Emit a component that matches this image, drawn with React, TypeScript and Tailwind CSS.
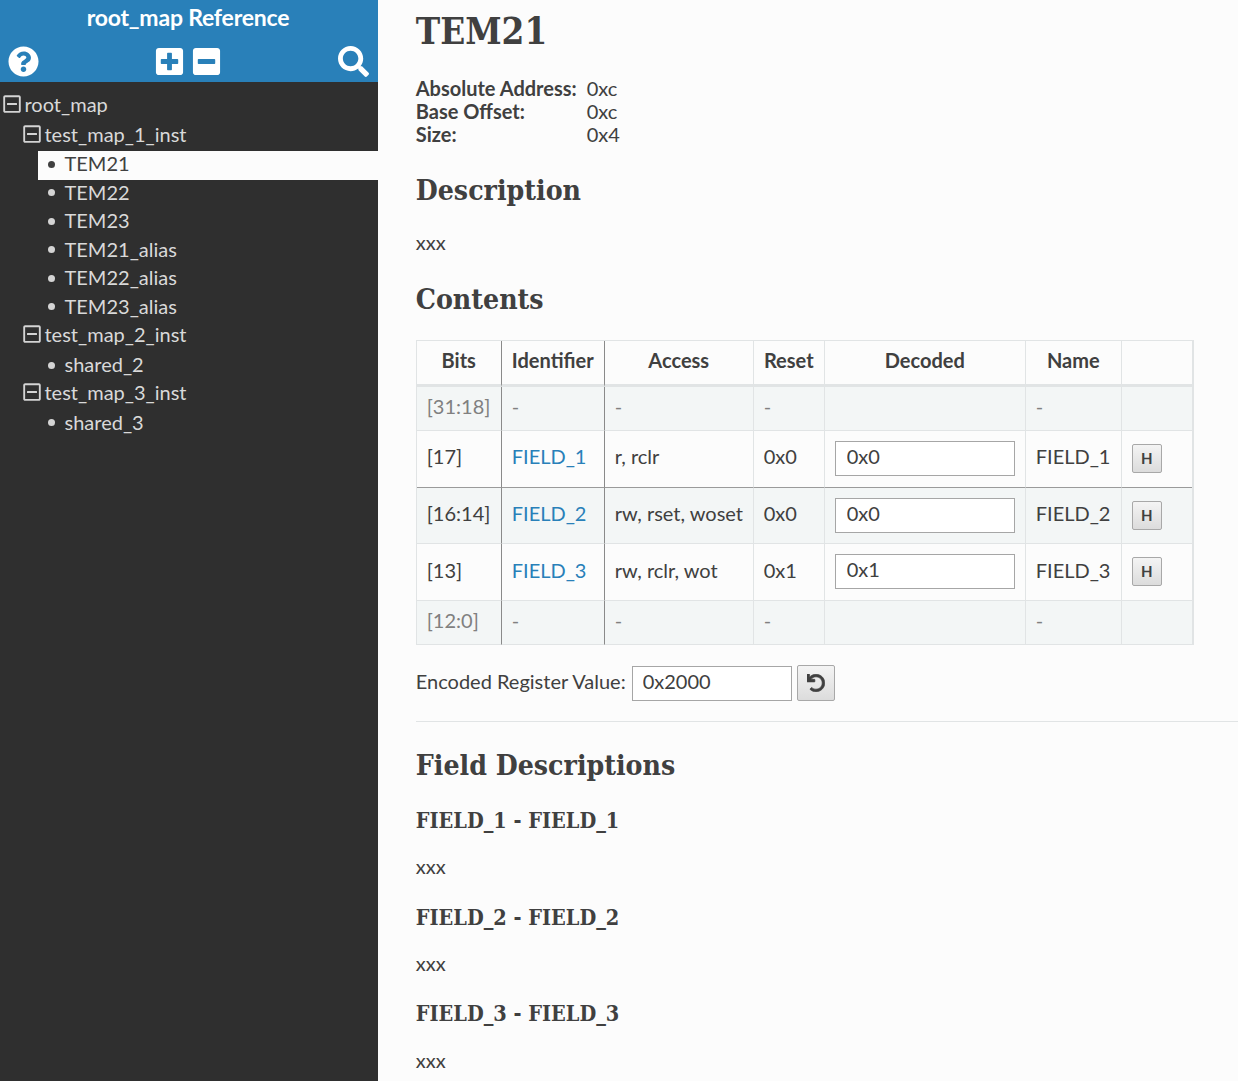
import React from "react";
import { FaMinusSquare, FaPlusSquare, FaQuestionCircle, FaRegMinusSquare, FaSearch, FaUndo } from "react-icons/fa";

const slab = "font-['DejaVu_Serif',serif] font-bold [font-stretch:condensed] text-[#404040]";

function TreeBranch({ label, rowClass }: { label: string; rowClass: string }) {
  return (
    <div className={`flex items-center gap-[2.5px] ${rowClass}`}>
      <FaRegMinusSquare size={20} color="#d4d4d4" />
      <span>{label}</span>
    </div>
  );
}

function Leaf({ label, active, rowClass }: { label: string; active?: boolean; rowClass: string }) {
  return (
    <div className={`ml-[38px] flex items-center pl-[10px] ${rowClass} ${active ? "bg-[#fcfcfc] text-[#404040]" : ""}`}>
      <span className={`mt-[2px] mr-[9.5px] h-[7px] w-[7px] rounded-full ${active ? "bg-[#404040]" : "bg-[#d4d4d4]"}`} />
      <span>{label}</span>
    </div>
  );
}

function Sidebar() {
  return (
    <aside className="flex h-full w-[378px] shrink-0 flex-col bg-[#2f2f2f] text-[20px] text-[#d9d9d9]">
      <div className="h-[82px] bg-[#2980b9] text-white">
        <div className="h-[38px] pt-[1px] pr-[2px] text-center text-[23px] leading-[32px] font-bold tracking-[-0.2px]">root_map Reference</div>
        <div className="flex items-center justify-between pt-[8px] pr-[9.5px] pl-[7.5px]">
          <FaQuestionCircle size={31} color="#fff" />
          <div className="flex gap-[6.5px]">
            <FaPlusSquare size={31} color="#fff" />
            <FaMinusSquare size={31} color="#fff" />
          </div>
          <FaSearch size={31} color="#fff" />
        </div>
      </div>
      <nav className="pt-[8px] leading-[28px]">
        <TreeBranch label="root_map" rowClass="h-[30px] pb-[2px] pl-[2px]" />
        <TreeBranch label="test_map_1_inst" rowClass="h-[30px] pb-[2px] pl-[22px]" />
        <Leaf label="TEM21" active rowClass="mt-[1px] -mb-[1.5px] h-[29px] pb-[5px]" />
        <Leaf label="TEM22" rowClass="h-[28.5px] pb-[2px]" />
        <Leaf label="TEM23" rowClass="h-[28.5px] pb-[2px]" />
        <Leaf label="TEM21_alias" rowClass="h-[28.5px] pb-[2px]" />
        <Leaf label="TEM22_alias" rowClass="h-[28.5px] pb-[2px]" />
        <Leaf label="TEM23_alias" rowClass="h-[28.5px] pb-[2px]" />
        <TreeBranch label="test_map_2_inst" rowClass="h-[29px] pb-[4px] pl-[22px]" />
        <Leaf label="shared_2" rowClass="h-[28.5px]" />
        <TreeBranch label="test_map_3_inst" rowClass="h-[29px] pb-[2px] pl-[22px]" />
        <Leaf label="shared_3" rowClass="h-[28.5px]" />
      </nav>
    </aside>
  );
}

type Row = {
  bits: string;
  id: string;
  access: string;
  reset: string;
  decoded?: string;
  name: string;
  reserved?: boolean;
  striped: boolean;
  h: string;
  border: string;
  textPad: string;
  boxPad: string;
};

const rows: Row[] = [
  { bits: "[31:18]", id: "-", access: "-", reset: "-", name: "-", reserved: true, striped: true, h: "h-[44px]", border: "border-b-[#e1e4e5]", textPad: "pb-[6px]", boxPad: "pb-[2px]" },
  { bits: "[17]", id: "FIELD_1", access: "r, rclr", reset: "0x0", decoded: "0x0", name: "FIELD_1", striped: false, h: "h-[57px]", border: "border-b-[#9a9a9a]", textPad: "pb-[6px]", boxPad: "pb-[2px]" },
  { bits: "[16:14]", id: "FIELD_2", access: "rw, rset, woset", reset: "0x0", decoded: "0x0", name: "FIELD_2", striped: true, h: "h-[56px]", border: "border-b-[#e1e4e5]", textPad: "pb-[6px]", boxPad: "pb-[1px]" },
  { bits: "[13]", id: "FIELD_3", access: "rw, rclr, wot", reset: "0x1", decoded: "0x1", name: "FIELD_3", striped: false, h: "h-[57px]", border: "border-b-[#e1e4e5]", textPad: "pb-[4px]", boxPad: "pb-[2px]" },
  { bits: "[12:0]", id: "-", access: "-", reset: "-", name: "-", reserved: true, striped: true, h: "h-[44px]", border: "border-b-[#e1e4e5]", textPad: "pb-[6px]", boxPad: "pb-[2px]" },
];

const th = "border-r border-[#e1e4e5] pb-[6px] text-center font-bold px-0";
const td = "border-r border-[#e1e4e5] px-[10px] text-left whitespace-nowrap";
const dark = "border-r border-r-[#8a8a8a]";

function FieldTable() {
  return (
    <table className="mt-[22px] w-[777px] table-fixed border-separate border-spacing-0 border-t border-r-2 border-l border-[#e1e4e5] text-[20px] text-[#404040]">
      <colgroup>
        <col className="w-[85px]" />
        <col className="w-[103px]" />
        <col className="w-[149px]" />
        <col className="w-[71px]" />
        <col className="w-[201px]" />
        <col className="w-[96px]" />
        <col className="w-[70px]" />
      </colgroup>
      <thead>
        <tr className="h-[46px]">
          <th className={`${th} ${dark} border-b-[3px] border-b-[#e1e4e5]`}>Bits</th>
          <th className={`${th} ${dark} border-b-[3px] border-b-[#e1e4e5]`}>Identifier</th>
          <th className={`${th} border-b-[3px]`}>Access</th>
          <th className={`${th} border-b-[3px]`}>Reset</th>
          <th className={`${th} border-b-[3px]`}>Decoded</th>
          <th className={`${th} border-b-[3px]`}>Name</th>
          <th className="border-b-[3px] border-[#e1e4e5]" />
        </tr>
      </thead>
      <tbody>
        {rows.map((r) => {
          const cell = `border-b ${r.border} ${r.striped ? "bg-[#f3f6f6]" : ""}`;
          const muted = r.reserved ? "text-[#808080]" : "";
          return (
            <tr key={r.bits} className={r.h}>
              <td className={`${td} ${r.textPad} ${dark} ${cell} ${muted}`}>{r.bits}</td>
              <td className={`${td} ${r.textPad} ${dark} ${cell} ${muted}`}>
                {r.reserved ? r.id : <a className="text-[#2980b9]">{r.id}</a>}
              </td>
              <td className={`${td} ${r.textPad} ${cell} ${muted}`}>{r.access}</td>
              <td className={`${td} ${r.textPad} ${cell} ${muted}`}>{r.reset}</td>
              <td className={`border-r border-[#e1e4e5] px-[10px] ${r.boxPad} ${cell}`}>
                {r.decoded && (
                  <input
                    readOnly
                    value={r.decoded}
                    className="block h-[35px] w-full border border-[#a6a6a6] bg-white px-[11px] pb-[5px] text-[20px] text-[#404040] outline-none"
                  />
                )}
              </td>
              <td className={`${td} ${r.textPad} ${cell} ${muted}`}>{r.name}</td>
              <td className={`px-[10px] ${r.boxPad} ${cell}`}>
                {r.decoded && (
                  <button className="flex h-[29px] w-[30px] items-center justify-center rounded-[2px] border border-[#a8a8a8] bg-gradient-to-b from-[#f4f4f4] to-[#dcdcdc] text-[15px] font-bold text-[#404040]">
                    H
                  </button>
                )}
              </td>
            </tr>
          );
        })}
      </tbody>
    </table>
  );
}

function FieldDesc({ title, gap }: { title: string; gap: string }) {
  return (
    <>
      <h3 className={`${slab} ${gap} text-[21.5px] leading-[28px]`}>{title}</h3>
      <p className="mt-[19.3px] text-[20px] leading-[24px]">xxx</p>
    </>
  );
}

export default function App() {
  return (
    <div className="flex h-[1081px] w-[1238px] overflow-hidden bg-[#fcfcfc] font-['Lato',sans-serif] text-[#404040]">
      <Sidebar />
      <main className="min-w-0 flex-1 pl-[37.75px]">
        <h1 className={`${slab} mt-[9px] text-[36.5px] leading-[46px]`}>TEM21</h1>
        <div className="mt-[22px] grid w-fit grid-cols-[171px_auto] text-[20px] leading-[23px]">
          <b className="font-bold">Absolute Address:</b>
          <span>0xc</span>
          <b className="font-bold">Base Offset:</b>
          <span>0xc</span>
          <b className="font-bold">Size:</b>
          <span>0x4</span>
        </div>
        <h2 className={`${slab} mt-[27px] text-[28.2px] leading-[36px]`}>Description</h2>
        <p className="mt-[21px] text-[20px] leading-[24px]">xxx</p>
        <h2 className={`${slab} mt-[28px] text-[28.2px] leading-[36px]`}>Contents</h2>
        <FieldTable />
        <div className="mt-[20px] flex items-center text-[20px]">
          <span className="pb-[5px]">Encoded Register Value:</span>
          <input
            readOnly
            value="0x2000"
            className="ml-[6px] h-[35px] w-[160px] border border-[#a6a6a6] bg-white px-[10px] pb-[5px] text-[20px] text-[#404040] outline-none"
          />
          <button className="ml-[5px] flex h-[36px] w-[38px] items-center justify-center rounded-[2px] border border-[#a8a8a8] bg-gradient-to-b from-[#f4f4f4] to-[#dcdcdc]">
            <FaUndo size={18} color="#404040" stroke="#404040" strokeWidth={20} />
          </button>
        </div>
        <div className="mt-[20px] border-t border-[#e1e4e5]" />
        <h2 className={`${slab} mt-[26px] text-[28.2px] leading-[36px]`}>Field Descriptions</h2>
        <FieldDesc title="FIELD_1 - FIELD_1" gap="mt-[23px]" />
        <FieldDesc title="FIELD_2 - FIELD_2" gap="mt-[25.5px]" />
        <FieldDesc title="FIELD_3 - FIELD_3" gap="mt-[25.2px]" />
      </main>
    </div>
  );
}
